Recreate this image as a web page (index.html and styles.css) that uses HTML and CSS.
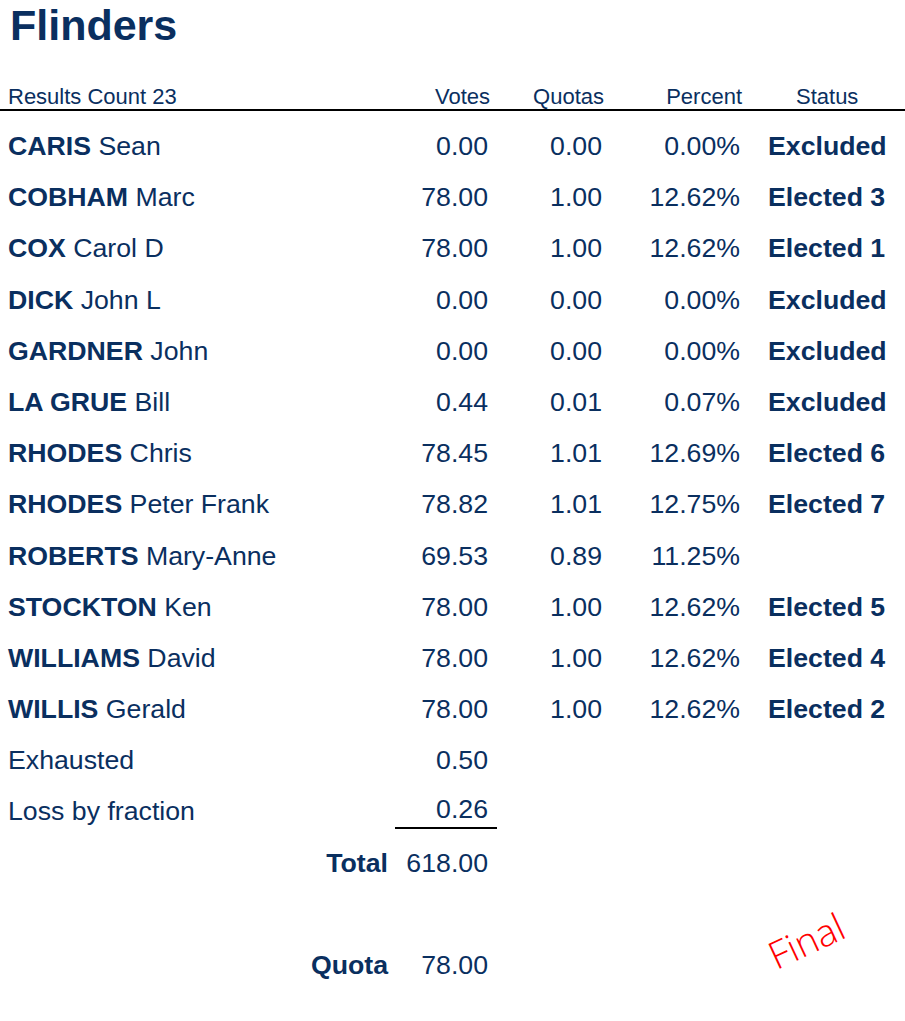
FILE: index.html
```html
<!DOCTYPE html>
<html>
<head>
<meta charset="utf-8">
<link rel="stylesheet" href="styles.css">
</head>
<body>
<div class="page">
  <h1 class="title">Flinders</h1>
  <div class="head">
    <div class="h-name">Results Count 23</div>
    <div class="num">Votes</div>
    <div class="num">Quotas</div>
    <div class="num">Percent</div>
    <div class="h-status">Status</div>
  </div>
  <div class="table">
    <div class="name"><b>CARIS</b> Sean</div><div class="num">0.00</div><div class="num">0.00</div><div class="num">0.00%</div><div class="status">Excluded</div>
    <div class="name"><b>COBHAM</b> Marc</div><div class="num">78.00</div><div class="num">1.00</div><div class="num">12.62%</div><div class="status">Elected 3</div>
    <div class="name"><b>COX</b> Carol D</div><div class="num">78.00</div><div class="num">1.00</div><div class="num">12.62%</div><div class="status">Elected 1</div>
    <div class="name"><b>DICK</b> John L</div><div class="num">0.00</div><div class="num">0.00</div><div class="num">0.00%</div><div class="status">Excluded</div>
    <div class="name"><b>GARDNER</b> John</div><div class="num">0.00</div><div class="num">0.00</div><div class="num">0.00%</div><div class="status">Excluded</div>
    <div class="name"><b>LA GRUE</b> Bill</div><div class="num">0.44</div><div class="num">0.01</div><div class="num">0.07%</div><div class="status">Excluded</div>
    <div class="name"><b>RHODES</b> Chris</div><div class="num">78.45</div><div class="num">1.01</div><div class="num">12.69%</div><div class="status">Elected 6</div>
    <div class="name"><b>RHODES</b> Peter Frank</div><div class="num">78.82</div><div class="num">1.01</div><div class="num">12.75%</div><div class="status">Elected 7</div>
    <div class="name"><b>ROBERTS</b> Mary-Anne</div><div class="num">69.53</div><div class="num">0.89</div><div class="num">11.25%</div><div class="status"></div>
    <div class="name"><b>STOCKTON</b> Ken</div><div class="num">78.00</div><div class="num">1.00</div><div class="num">12.62%</div><div class="status">Elected 5</div>
    <div class="name"><b>WILLIAMS</b> David</div><div class="num">78.00</div><div class="num">1.00</div><div class="num">12.62%</div><div class="status">Elected 4</div>
    <div class="name"><b>WILLIS</b> Gerald</div><div class="num">78.00</div><div class="num">1.00</div><div class="num">12.62%</div><div class="status">Elected 2</div>
    <div class="name">Exhausted</div><div class="num">0.50</div><div class="rest"></div>
    <div class="name">Loss by fraction</div><div class="num sumcell"><span class="sum">0.26</span></div><div class="rest"></div>
    <div class="name label">Total</div><div class="num">618.00</div><div class="rest"></div>
    <div class="spacer"></div>
    <div class="name label">Quota</div><div class="num">78.00</div><div class="rest"></div>
  </div>
  <div class="stamp">Final</div>
</div>
</body>
</html>
```

FILE: styles.css
```css
html, body {
  margin: 0;
  padding: 0;
  background: #ffffff;
}

.page {
  position: relative;
  width: 905px;
  height: 1021px;
  overflow: hidden;
  font-family: "Liberation Sans", Arial, sans-serif;
  color: #0a2f5f;
}

.title {
  margin: 0;
  padding: 1px 0 0 10px;
  font-size: 43px;
  line-height: 48px;
  font-weight: bold;
}

.head {
  display: grid;
  grid-template-columns: 382px 100px 114px 138px 1fr;
  margin-top: 36px;
  padding-left: 8px;
  font-size: 22px;
  line-height: 24px;
  border-bottom: 2px solid #000;
}

.head .num {
  text-align: right;
}

.h-status {
  padding-left: 54px;
}

.table {
  display: grid;
  grid-template-columns: 382px 98px 114px 138px 1fr;
  grid-auto-rows: 51.2px;
  padding: 10px 0 0 8px;
  font-size: 26.7px;
  line-height: 51.2px;
}

.name {
  white-space: nowrap;
}

.name b {
  font-weight: bold;
}

.num {
  text-align: right;
  white-space: nowrap;
}

.status {
  padding-left: 28px;
  font-weight: bold;
  white-space: nowrap;
}

.rest {
  grid-column: 3 / -1;
}

.spacer {
  grid-column: 1 / -1;
}

.label {
  text-align: right;
  padding-right: 2px;
  font-weight: bold;
}

.sumcell {
  margin-right: -9px;
}

.sum {
  display: block;
  margin-left: 5px;
  padding: 6px 9px 0 0;
  line-height: 35px;
  border-bottom: 2px solid #000;
}

.stamp {
  position: absolute;
  left: 754px;
  top: 918px;
  width: 104px;
  text-align: center;
  font-family: "Open Sans", "DejaVu Sans", sans-serif;
  font-weight: 300;
  font-size: 38px;
  line-height: 44px;
  color: #ff0000;
  transform: rotate(-25deg);
}
```
